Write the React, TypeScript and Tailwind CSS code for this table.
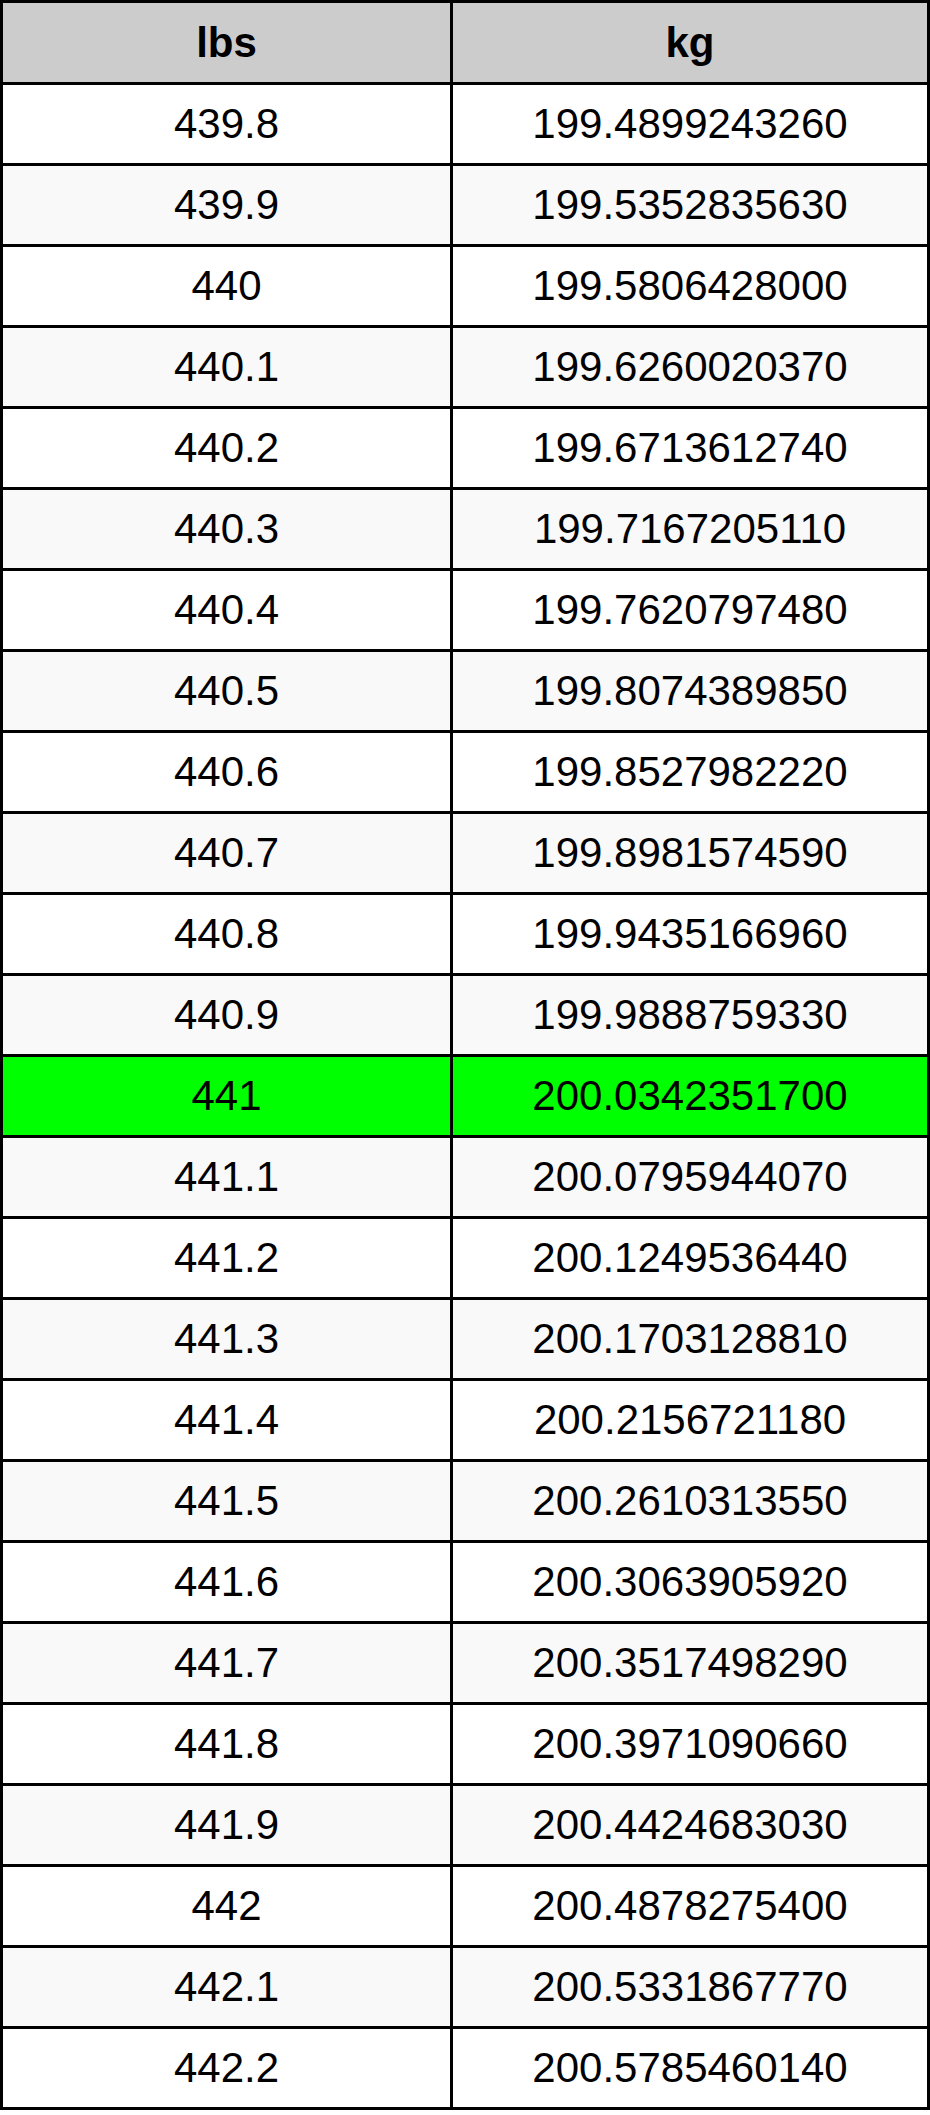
const rows: [string, string][] = [
  ["439.8", "199.4899243260"],
  ["439.9", "199.5352835630"],
  ["440", "199.5806428000"],
  ["440.1", "199.6260020370"],
  ["440.2", "199.6713612740"],
  ["440.3", "199.7167205110"],
  ["440.4", "199.7620797480"],
  ["440.5", "199.8074389850"],
  ["440.6", "199.8527982220"],
  ["440.7", "199.8981574590"],
  ["440.8", "199.9435166960"],
  ["440.9", "199.9888759330"],
  ["441", "200.0342351700"],
  ["441.1", "200.0795944070"],
  ["441.2", "200.1249536440"],
  ["441.3", "200.1703128810"],
  ["441.4", "200.2156721180"],
  ["441.5", "200.2610313550"],
  ["441.6", "200.3063905920"],
  ["441.7", "200.3517498290"],
  ["441.8", "200.3971090660"],
  ["441.9", "200.4424683030"],
  ["442", "200.4878275400"],
  ["442.1", "200.5331867770"],
  ["442.2", "200.5785460140"],
];

const HIGHLIGHT = "441";

export default function App() {
  return (
    <div className="w-[930px] bg-white font-['Liberation_Sans',Arial,sans-serif] text-[42px] leading-none text-black">
      <div className="flex flex-col border-[3px] border-black">
        {/* header */}
        <div className="flex h-[79px] bg-[#cccccc] font-bold">
          <div className="flex w-[450px] items-center justify-center border-r-[3px] border-black">
            lbs
          </div>
          <div className="flex flex-1 items-center justify-center">kg</div>
        </div>

        {rows.map(([lbs, kg], i) => {
          const bg =
            lbs === HIGHLIGHT
              ? "bg-[#00ff00]"
              : i % 2 === 0
                ? "bg-white"
                : "bg-[#f9f9f9]";
          return (
            <div
              key={lbs}
              className={`flex h-[81px] border-t-[3px] border-black ${bg}`}
            >
              <div className="flex w-[450px] items-center justify-center border-r-[3px] border-black">
                {lbs}
              </div>
              <div className="flex flex-1 items-center justify-center">
                {kg}
              </div>
            </div>
          );
        })}
      </div>
    </div>
  );
}
